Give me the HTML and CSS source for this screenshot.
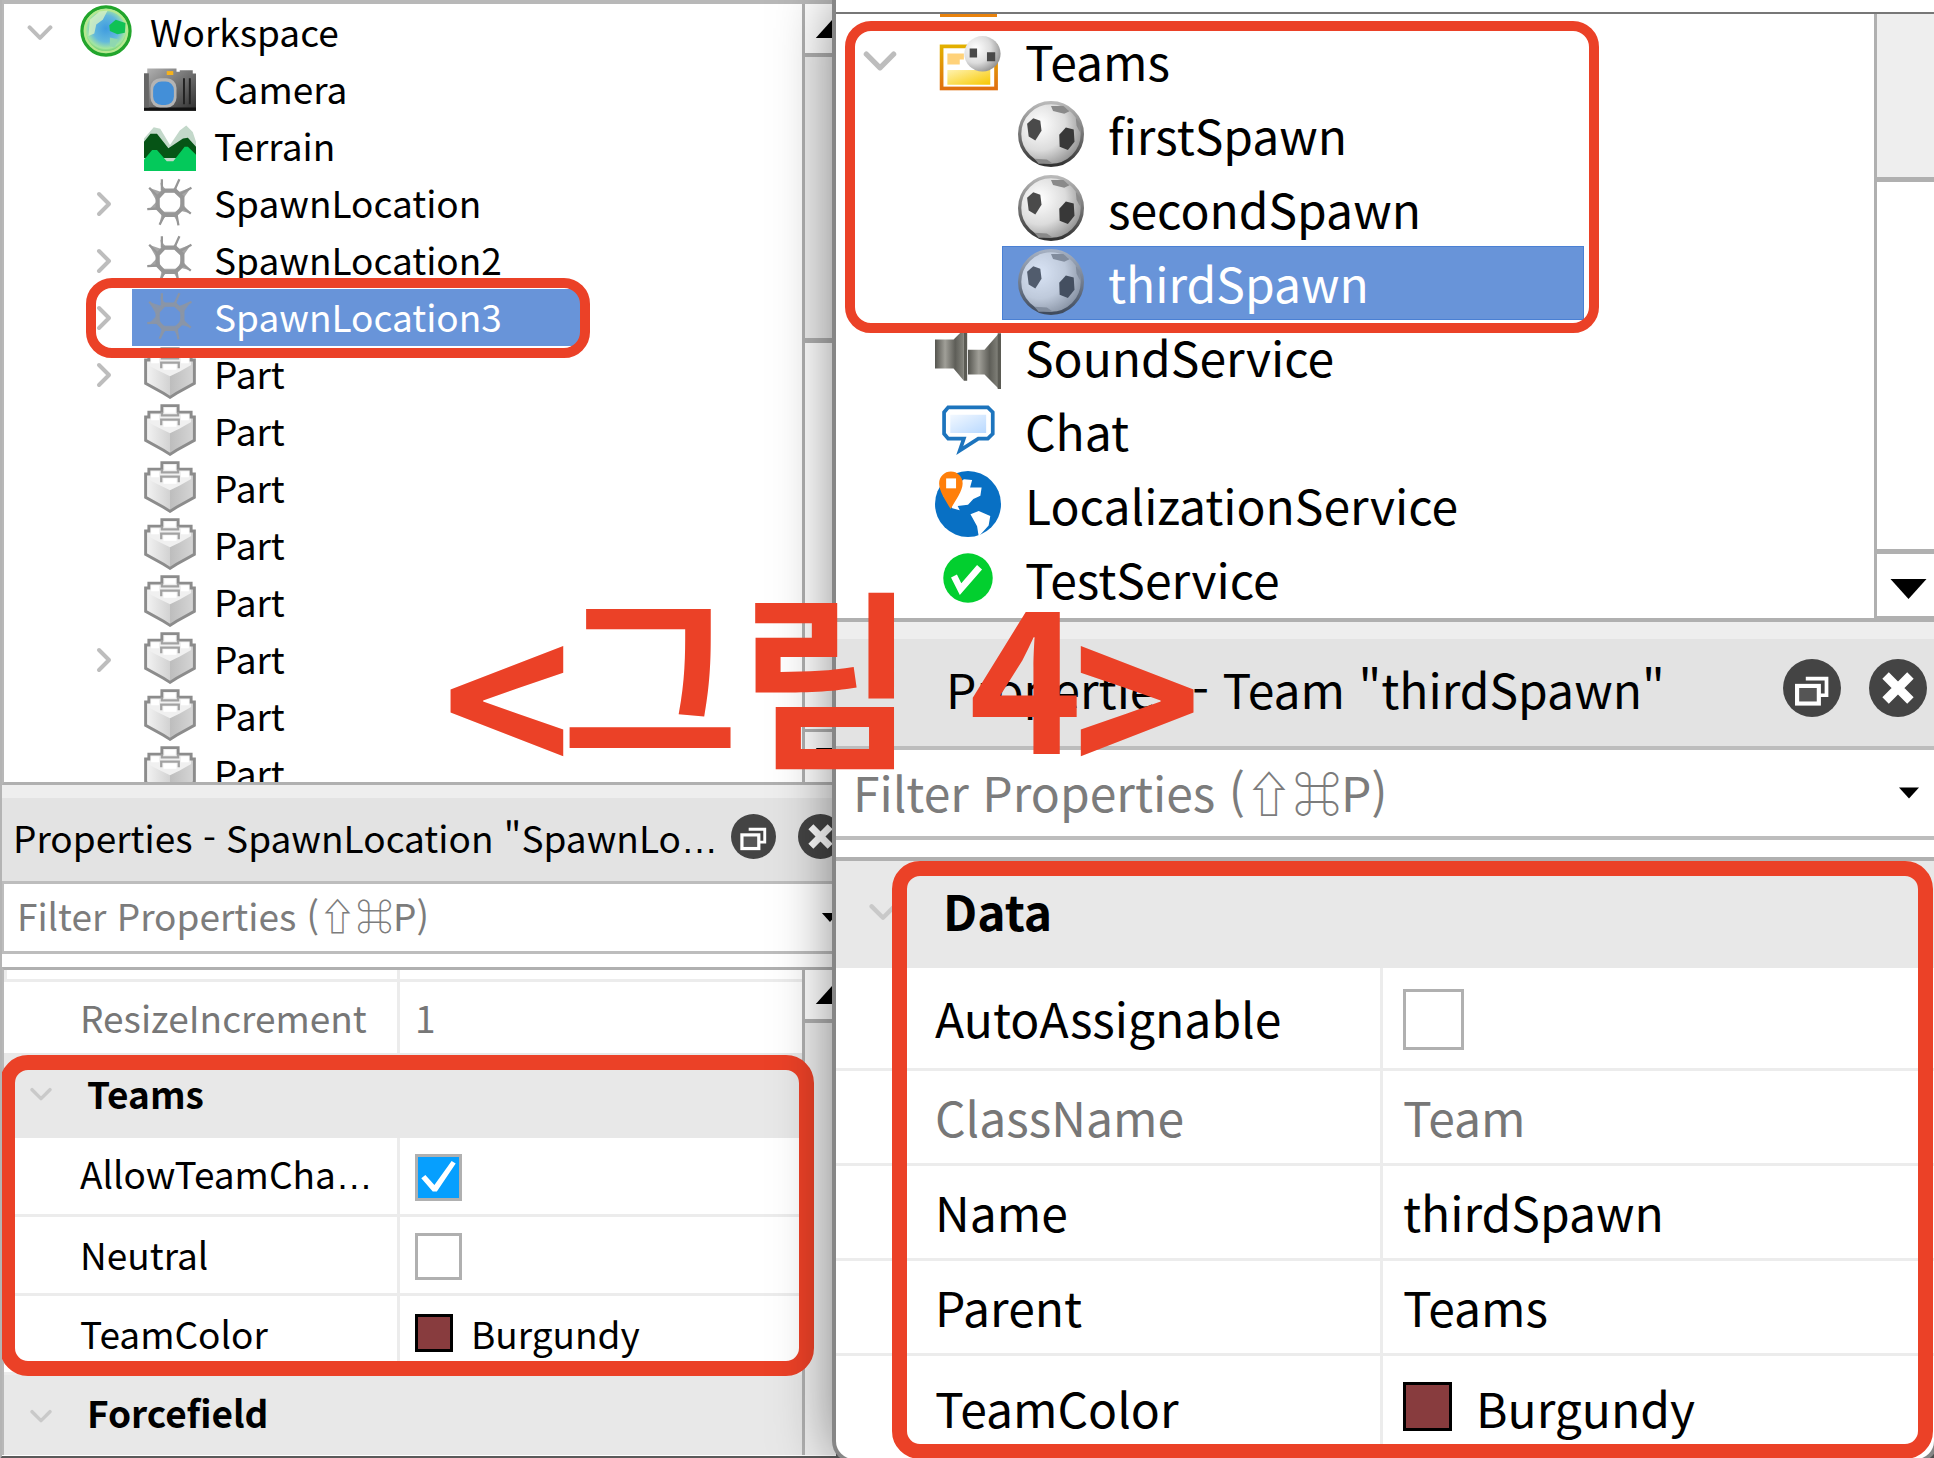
FILE: index.html
```html
<!DOCTYPE html>
<html lang="ko">
<head>
<meta charset="utf-8">
<title>그림 4</title>
<link rel="stylesheet" href="styles.css">
</head>
<body>
<svg class="sprite" aria-hidden="true">
  <defs>
    <radialGradient id="g-globe" cx="0.5" cy="0.45" r="0.55">
      <stop offset="0" stop-color="#3f9be0"/><stop offset="0.5" stop-color="#63b9dc"/><stop offset="0.75" stop-color="#a4e6a0"/><stop offset="1" stop-color="#2fae3a"/>
    </radialGradient>
    <linearGradient id="g-cam" x1="0" x2="1" y1="0" y2="1"><stop offset="0" stop-color="#b5b5b5"/><stop offset="1" stop-color="#2e2e2e"/></linearGradient>
    <linearGradient id="g-brick-l" x1="0" x2="1"><stop offset="0" stop-color="#f4f4f4"/><stop offset="1" stop-color="#d2d2d2"/></linearGradient>
    <linearGradient id="g-brick-r" x1="0" x2="1"><stop offset="0" stop-color="#bdbdbd"/><stop offset="1" stop-color="#d6d6d6"/></linearGradient>
    <radialGradient id="g-ball" cx="0.32" cy="0.35" r="0.75"><stop offset="0" stop-color="#fff"/><stop offset="0.55" stop-color="#dcdcdc"/><stop offset="1" stop-color="#8c8c8c"/></radialGradient>
    <linearGradient id="g-ball-edge" x1="0" x2="0" y1="0" y2="1"><stop offset="0" stop-color="#b9b9b9"/><stop offset="1" stop-color="#333"/></linearGradient>
    <linearGradient id="g-folder" x1="0" x2="1" y1="0" y2="1"><stop offset="0" stop-color="#fff3b0"/><stop offset="1" stop-color="#f7c800"/></linearGradient>
    <linearGradient id="g-folder-edge" x1="0" x2="0" y1="0" y2="1"><stop offset="0" stop-color="#e2b000"/><stop offset="1" stop-color="#e07010"/></linearGradient>
    <linearGradient id="g-horn" x1="0" x2="1"><stop offset="0" stop-color="#55554f"/><stop offset="0.35" stop-color="#a09f98"/><stop offset="0.7" stop-color="#5e5e58"/><stop offset="1" stop-color="#85857d"/></linearGradient>
    <linearGradient id="g-chat" x1="0" x2="1" y1="0" y2="1"><stop offset="0" stop-color="#f2f8ff"/><stop offset="1" stop-color="#b9d9ff"/></linearGradient>
  </defs>
  <symbol id="i-down" viewBox="0 0 32 20"><path d="M3 3l13 13L29 3" fill="none" stroke="#bdbdbd" stroke-width="5" stroke-linecap="round" stroke-linejoin="round"/></symbol>
  <symbol id="i-right" viewBox="0 0 16 26"><path d="M3 3l10 10L3 23" fill="none" stroke="#bdbdbd" stroke-width="4" stroke-linecap="round" stroke-linejoin="round"/></symbol>
  <symbol id="i-globe" viewBox="0 0 16 16">
    <circle cx="8" cy="8" r="7.4" fill="url(#g-globe)" stroke="#22a52c" stroke-width="1"/>
    <circle cx="8" cy="8" r="6.500" fill="none" stroke="#b6e890" stroke-width="0.7"/>
    <path d="M3 4.500L6 2l2.500-.3L7 4.500 5 6l-.6 2.800L2.600 9.500z" fill="#d9f3c0" opacity="0.8"/>
    <path d="M9 6.200L11 4.500l3 1-.2 3L11.500 9 9.200 8z" fill="#10c255"/>
    <path d="M9.200 10l2.500.5-1 2.600-1.500-.5z" fill="#8fd7b0"/>
  </symbol>
  <symbol id="i-camera" viewBox="0 0 16 16">
    <path d="M1 2h9v1h1V2.500h4V3.500h1V15H0V3.500h1z" fill="url(#g-cam)"/>
    <path d="M0 14h16v1H0z" fill="#111"/>
    <path d="M0 3.500h1.500V14H0z" fill="#666"/>
    <path d="M12 5h.6v8H12zM13.800 5h.6v8h-.6z" fill="#222"/>
    <rect x="2" y="5" width="8" height="9" rx="3" fill="#b4b4b4"/>
    <rect x="2.800" y="6" width="6.400" height="7.200" rx="2.600" fill="#438fd8"/>
    <rect x="7" y="2.800" width="2" height="1.200" fill="#f6b21b"/>
  </symbol>
  <symbol id="i-terrain" viewBox="0 0 16 16">
    <path d="M0 6l3-3.500 2 .5 3 5 3-4.500 2-1.500 2 2 1 3v8H0z" fill="#c3d8ca"/>
    <path d="M0 7l2-2.500h2L7.500 9 12 6 13.500 5.800 16 8.500V12H0z" fill="#065416"/>
    <path d="M0 12.500L2.500 9.500h1.500L7 13h2l3.500-4.500h1L16 11v5H0z" fill="#04c95b"/>
  </symbol>
  <symbol id="i-spawn" viewBox="0 0 16 16">
    <g fill="none" stroke="#969696">
      <path d="M6.200 4.500h3.400L11.800 6.600v3.300L9.600 12H6.200L4.200 9.900V6.600z" stroke-width="1.300"/>
      <path d="M5.500 1v3.500M9.300 4.500L10.900 1M11 5.600L14.600 3.600M11.600 9.400L14.400 11.600M10 11.800l.6 3.400M6.400 11.800L4.800 15M4.200 10L1 10.200M4.500 6.600L1.600 3.600" stroke-width="0.700"/>
    </g>
    <path d="M5 2L5.600 5h4l.8-2.500-1.400 1.600H6.600zM14.500 3.500l-4 1.500 1 2.800zM14.500 11.500l-3-3.200-1 2.200zM10.700 15L10 11H5.600l-.8 3.500 2-2.200h2.400zM1.500 10.300h3.700L4.200 7.500zM1.500 3.600l2.400 4.200L5.600 5z" fill="#969696" opacity="0.850"/>
  </symbol>
  <symbol id="i-part" viewBox="0 0 16 16">
    <path d="M.5 4H8v11.500L6 14l-5.500-3z" fill="url(#g-brick-l)"/>
    <path d="M15.500 4H8v11.500l2-1.500 5.500-3z" fill="url(#g-brick-r)"/>
    <path d="M1.500 2.500h4v-2h5v2h4v3L11 7.500 8 9 5 7.500 1.500 5.800z" fill="#f0f0f0"/>
    <path d="M8 15.500L6 14.200.5 11.200V4h1V2.500h4v-2h5v2h4V4h1v7.200L10 14.200z" fill="none" stroke="#8c8c8c" stroke-width="0.900"/>
    <path d="M5.500 2.500v1h5v-1M5.300 6.500V4.800h5.400v1.700" fill="none" stroke="#a2a2a2" stroke-width="0.700"/>
    <path d="M6.300 1.200h3.400v1.500H6.300zM2.200 3.200h2.400v1.800H2.200zM11.400 3.200h2.400v1.800h-2.400zM6 5.400h4v1.600H6z" fill="#fff"/>
  </symbol>
  <symbol id="i-ball" viewBox="0 0 16 16">
    <circle cx="8" cy="8" r="7.600" fill="url(#g-ball)" stroke="url(#g-ball-edge)" stroke-width="0.800"/>
    <path d="M2.200 5.500l1.500-1.300 1.700.6.300 2.400-1.500 2.400-1.600-1z" fill="#4a4a4a"/>
    <path d="M10 8.200l1.600-1.800 1.900.5.200 3-1.600 2-2-.8z" fill="#383838"/>
    <path d="M8 1.200h3l1.500 1.300-1.300.6L8.500 2.400zM4 14l3 .2 1.500 1H5zM14 4l1 1.500v2L14.200 6z" fill="#8a8a8a"/>
  </symbol>
  <symbol id="i-folder" viewBox="0 0 16 16">
    <rect x="1.600" y="4.700" width="13.200" height="10.200" fill="#fff" stroke="url(#g-folder-edge)" stroke-width="0.900"/>
    <path d="M3 6.400h4v1.500H6v1.200H3z" fill="#ffd27a"/>
    <path d="M3 10.400h10.400v3.600H3z" fill="url(#g-folder)"/>
    <ellipse cx="11.500" cy="6.500" rx="4.400" ry="4.300" fill="url(#g-ball)"/>
    <path d="M8.400 5.200h1.800v2.200H8.400zM12.600 6.100h2v2.200h-2z" fill="#484848"/>
  </symbol>
  <symbol id="i-sound" viewBox="0 0 16 16">
    <path d="M0 4h4.500L7 1.500V14L4.500 11H0z" fill="url(#g-horn)"/>
    <path d="M8 6.500h4l3.500-4V16L12 12.500H8z" fill="url(#g-horn)"/>
    <path d="M7 1.500h.8V14H7zM15.200 2.500h.8V16h-.8z" fill="#5b5b54"/>
  </symbol>
  <symbol id="i-chat" viewBox="0 0 16 16">
    <path d="M3.200 2.500h9.600l1.200 1.200v5.200l-1.200 1.200H10.500L6 13 7 10.100H3.200L2.200 8.900V3.700z" fill="#fff" stroke="#1d74bd" stroke-width="0.900"/>
    <path d="M3.700 4.300h8.700v4.400H3.700z" fill="url(#g-chat)"/>
  </symbol>
  <symbol id="i-local" viewBox="0 0 16 16">
    <circle cx="8" cy="8" r="8" fill="#0870c4"/>
    <path d="M7 2l2 .2L8.500 4l2.800 0-.3 2L9.300 6.800 8 8.200 5.500 8.500l.5 1L4.200 9 2 6z" fill="#fff"/>
    <path d="M8.600 10.500l2-.8 2.800 1.200-.4 2.300-2.400 2.700-.4-2.500z" fill="#fff"/>
    <path d="M3.800 9.200C2.500 7 1 4.800 1 3A2.850 2.850 0 0 1 6.700 3C6.700 4.800 5 7 3.800 9.200z" fill="#ff7f0a"/>
    <rect x="2.700" y="1.800" width="2.400" height="2.400" fill="#fff"/>
  </symbol>
  <symbol id="i-test" viewBox="0 0 16 16">
    <circle cx="8" cy="8" r="6" fill="#02cf2f"/>
    <path d="M4.600 7.500l1.600 3.200L10.800 5.400" fill="none" stroke="#fff" stroke-width="1.600"/>
  </symbol>
  <symbol id="i-float" viewBox="0 0 28 28">
    <circle cx="14" cy="14" r="14" fill="#444"/>
    <path d="M11 9.500h10v8h-3" fill="none" stroke="#fff" stroke-width="1.800"/>
    <rect x="6.800" y="13" width="10.500" height="8.500" fill="#555" stroke="#fff" stroke-width="2"/>
  </symbol>
  <symbol id="i-close" viewBox="0 0 28 28">
    <circle cx="14" cy="14" r="14" fill="#444"/>
    <path d="M8 8l12 12M20 8L8 20" stroke="#fff" stroke-width="4.400"/>
  </symbol>
  <symbol id="i-tri-up" viewBox="0 0 18 10"><path d="M0 10h18L9 0z"/></symbol>
  <symbol id="i-tri-down" viewBox="0 0 18 10"><path d="M0 0h18L9 10z"/></symbol>
</svg>

<main class="page">
  <section class="window small" aria-label="SpawnLocation3">
    <div class="explorer">
      <ul class="tree">
        <li><div class="row"><span class="twisty"><svg class="down"><use href="#i-down"/></svg></span><span class="label"><svg class="icon"><use href="#i-globe"/></svg>Workspace</span></div>
          <ul>
            <li><div class="row"><span class="twisty"></span><span class="label"><svg class="icon"><use href="#i-camera"/></svg>Camera</span></div></li>
            <li><div class="row"><span class="twisty"></span><span class="label"><svg class="icon"><use href="#i-terrain"/></svg>Terrain</span></div></li>
            <li><div class="row"><span class="twisty"><svg class="right"><use href="#i-right"/></svg></span><span class="label"><svg class="icon"><use href="#i-spawn"/></svg>SpawnLocation</span></div></li>
            <li><div class="row"><span class="twisty"><svg class="right"><use href="#i-right"/></svg></span><span class="label"><svg class="icon"><use href="#i-spawn"/></svg>SpawnLocation2</span></div></li>
            <li><div class="row"><span class="twisty"><svg class="right"><use href="#i-right"/></svg></span><span class="label selected"><svg class="icon"><use href="#i-spawn"/></svg>SpawnLocation3</span></div></li>
            <li><div class="row"><span class="twisty"><svg class="right"><use href="#i-right"/></svg></span><span class="label"><svg class="icon"><use href="#i-part"/></svg>Part</span></div></li>
            <li><div class="row"><span class="twisty"></span><span class="label"><svg class="icon"><use href="#i-part"/></svg>Part</span></div></li>
            <li><div class="row"><span class="twisty"></span><span class="label"><svg class="icon"><use href="#i-part"/></svg>Part</span></div></li>
            <li><div class="row"><span class="twisty"></span><span class="label"><svg class="icon"><use href="#i-part"/></svg>Part</span></div></li>
            <li><div class="row"><span class="twisty"></span><span class="label"><svg class="icon"><use href="#i-part"/></svg>Part</span></div></li>
            <li><div class="row"><span class="twisty"><svg class="right"><use href="#i-right"/></svg></span><span class="label"><svg class="icon"><use href="#i-part"/></svg>Part</span></div></li>
            <li><div class="row"><span class="twisty"></span><span class="label"><svg class="icon"><use href="#i-part"/></svg>Part</span></div></li>
            <li><div class="row"><span class="twisty"></span><span class="label"><svg class="icon"><use href="#i-part"/></svg>Part</span></div></li>
          </ul>
        </li>
      </ul>
      <div class="scrollbar">
        <button class="step" type="button" aria-label="Scroll up"><svg><use href="#i-tri-up"/></svg></button>
        <div class="groove"></div>
        <div class="thumb"></div>
        <button class="step" type="button" aria-label="Scroll down"><svg><use href="#i-tri-down"/></svg></button>
      </div>
    </div>
    <header class="titlebar">
      <h2>Properties - SpawnLocation "SpawnLo<span class="more">…</span></h2>
      <button type="button" aria-label="Float"><svg><use href="#i-float"/></svg></button>
      <button type="button" aria-label="Close"><svg><use href="#i-close"/></svg></button>
    </header>
    <div class="filter">
      <input type="text" aria-label="Filter Properties" placeholder="Filter Properties (⇧⌘P)">
      <button type="button" aria-label="Filter history"><svg><use href="#i-tri-down"/></svg></button>
    </div>
    <div class="properties">
      <table>
        <colgroup><col class="names"><col></colgroup>
        <tbody>
          <tr class="sliver"><td></td><td></td></tr>
          <tr class="readonly first"><th scope="row">ResizeIncrement</th><td>1</td></tr>
        </tbody>
        <tbody>
          <tr class="group"><th colspan="2" scope="rowgroup"><svg><use href="#i-down"/></svg>Teams</th></tr>
          <tr><th scope="row"><label for="allow">AllowTeamCha<span class="more">…</span></label></th><td><input type="checkbox" id="allow" checked></td></tr>
          <tr><th scope="row"><label for="neutral">Neutral</label></th><td><input type="checkbox" id="neutral"></td></tr>
          <tr><th scope="row">TeamColor</th><td><span class="color"><i class="swatch"></i>Burgundy</span></td></tr>
        </tbody>
        <tbody>
          <tr class="group last"><th colspan="2" scope="rowgroup"><svg><use href="#i-down"/></svg>Forcefield</th></tr>
        </tbody>
      </table>
      <div class="scrollbar">
        <button class="step" type="button" aria-label="Scroll up"><svg><use href="#i-tri-up"/></svg></button>
        <div class="groove"></div>
      </div>
    </div>
    <div class="mark mark-location"></div>
    <div class="mark mark-teams"></div>
  </section>

  <section class="window large" aria-label="thirdSpawn">
    <div class="explorer">
      <ul class="tree">
        <li class="previous"></li>
        <li><div class="row"><span class="twisty"><svg class="down"><use href="#i-down"/></svg></span><span class="label"><svg class="icon"><use href="#i-folder"/></svg>Teams</span></div>
          <ul>
            <li><div class="row"><span class="twisty"></span><span class="label"><svg class="icon"><use href="#i-ball"/></svg>firstSpawn</span></div></li>
            <li><div class="row"><span class="twisty"></span><span class="label"><svg class="icon"><use href="#i-ball"/></svg>secondSpawn</span></div></li>
            <li><div class="row"><span class="twisty"></span><span class="label selected"><svg class="icon"><use href="#i-ball"/></svg>thirdSpawn</span></div></li>
          </ul>
        </li>
        <li><div class="row"><span class="twisty"></span><span class="label"><svg class="icon"><use href="#i-sound"/></svg>SoundService</span></div></li>
        <li><div class="row"><span class="twisty"></span><span class="label"><svg class="icon"><use href="#i-chat"/></svg>Chat</span></div></li>
        <li><div class="row"><span class="twisty"></span><span class="label"><svg class="icon"><use href="#i-local"/></svg>LocalizationService</span></div></li>
        <li><div class="row"><span class="twisty"></span><span class="label"><svg class="icon"><use href="#i-test"/></svg>TestService</span></div></li>
      </ul>
      <div class="scrollbar">
        <div class="groove"></div>
        <div class="thumb"></div>
        <button class="step" type="button" aria-label="Scroll down"><svg><use href="#i-tri-down"/></svg></button>
      </div>
    </div>
    <header class="titlebar">
      <h2>Properties - Team "thirdSpawn"</h2>
      <button type="button" aria-label="Float"><svg><use href="#i-float"/></svg></button>
      <button type="button" aria-label="Close"><svg><use href="#i-close"/></svg></button>
    </header>
    <div class="filter">
      <input type="text" aria-label="Filter Properties" placeholder="Filter Properties (⇧⌘P)">
      <button type="button" aria-label="Filter history"><svg><use href="#i-tri-down"/></svg></button>
    </div>
    <div class="properties">
      <table>
        <colgroup><col class="names"><col></colgroup>
        <tbody>
          <tr class="group"><th colspan="2" scope="rowgroup"><svg><use href="#i-down"/></svg>Data</th></tr>
          <tr class="first"><th scope="row"><label for="auto">AutoAssignable</label></th><td><input type="checkbox" id="auto"></td></tr>
          <tr class="readonly"><th scope="row">ClassName</th><td>Team</td></tr>
          <tr><th scope="row">Name</th><td>thirdSpawn</td></tr>
          <tr><th scope="row">Parent</th><td>Teams</td></tr>
          <tr class="last"><th scope="row">TeamColor</th><td><span class="color"><i class="swatch"></i>Burgundy</span></td></tr>
        </tbody>
      </table>
    </div>
    <div class="mark mark-tree"></div>
    <div class="mark mark-data"></div>
  </section>

  <p class="caption"><span class="angle">&lt;</span>그림 4<span class="angle">&gt;</span></p>
</main>
</body>
</html>
```
FILE: styles.css
```css
* { box-sizing: border-box; }

body {
  margin: 0;
  background: #5a5a5a;
  color: #000;
  font-family: "Noto Sans CJK KR", "Noto Sans", sans-serif;
}

.sprite { position: absolute; width: 0; height: 0; }

.page {
  position: relative;
  display: grid;
  grid-template-columns: 836fr 1098fr;
  overflow: hidden;
}

ul { list-style: none; margin: 0; padding: 0; }
button { border: 0; padding: 0; background: none; }
svg { display: block; flex: none; }

/* Windows: the same parts at two zoom levels */
.window {
  position: relative;
  background: #fff;
  font-size: var(--text);
  min-width: 0;
}

.small {
  --text: 37px;
  --row: 57px;
  --icon: 52px;
  --twisty: 56px;
  --label-pad: 12px;
  --label-gap: 18px;
  --indent: 64px;
  --line: 3px;
  --bar: 56px;
  --tri: 34px;
  --prop: 79px;
  --box: 47px;
  --chip: 38px;
  --dot: 45px;
  border-left: 2px solid #b4b4b4;
  border-bottom: 3px solid #5a5a5a;
  overflow: hidden;
}

.large {
  --text: 48px;
  --row: 74px;
  --icon: 66px;
  --twisty: 78px;
  --label-pad: 16px;
  --label-gap: 24px;
  --indent: 83px;
  --line: 4px;
  --bar: 60px;
  --tri: 37px;
  --prop: 95px;
  --box: 61px;
  --chip: 49px;
  --dot: 58px;
  border-radius: 0 0 18px 18px;
  box-shadow: 0 0 0 4px #868686, 0 0 60px rgba(0, 0, 0, 0.5);
}

/* Explorer tree */
.explorer {
  display: flex;
  overflow: hidden;
  border-bottom: var(--line) solid #b0b0b0;
}
.small .explorer { height: 785px; margin-right: -22px; border-top: 4px solid #b8b8b8; border-left: 2px solid #b8b8b8; }
.large .explorer { height: 622px; border-top: 12px solid #fff; box-shadow: inset 0 2px #777; }

.tree { flex: 1; min-width: 0; }
.small .tree { padding-left: 8px; }
.large .tree { padding: 0 0 0 5px; }
.tree ul { padding-left: var(--indent); }
.large .explorer { padding-top: 2px; background: linear-gradient(#777 2px, #fff 2px); box-shadow: none; }
.previous { width: 57px; height: 10px; margin-left: 99px; border-top: 3px solid #e8820c; }

.row { display: flex; height: var(--row); }
.twisty { display: flex; align-items: center; justify-content: center; width: var(--twisty); }
.small .down { width: 26px; height: 16px; }
.large .down { width: 34px; height: 21px; }
.right { width: 16px; height: 26px; }

.label {
  display: flex;
  align-items: center;
  gap: var(--label-gap);
  padding: 0 0 3px var(--label-pad);
  line-height: 54px;
  white-space: nowrap;
}
.icon { width: var(--icon); height: var(--icon); }
.selected { background: #6894d9; color: #fff; }
.small .selected { min-width: 448px; }
.large .selected { min-width: 582px; box-shadow: inset 0 0 0 1px #4a80d4; }
.selected .icon { opacity: 0.75; }

/* Scroll bars */
.scrollbar { display: flex; flex-direction: column; flex: none; width: var(--bar); border-left: 3px solid #b0b0b0; }
.scrollbar svg { width: var(--tri); height: 20px; }
.groove { background: #eee; }
.thumb { flex: 1; border-top: 5px solid #b0b0b0; background: #fff; }
.step { display: flex; align-items: center; justify-content: center; }
.small .step { height: 53px; border-bottom: 4px solid #b0b0b0; }
.small .thumb + .step { border-top: 3px solid #b0b0b0; border-bottom: 0; }
.small .explorer .groove { height: 281px; }
.small .properties .groove { flex: 1; }
.large .groove { height: 163px; }
.large .step { height: 69px; padding: 8px 0 0 5px; border-top: 5px solid #b0b0b0; border-bottom: 2px solid #b0b0b0; }
.small .scrollbar svg { height: 18px; }

/* Properties title bar */
.titlebar {
  display: flex;
  align-items: center;
  background: #e3e3e3;
  border-bottom: var(--line) solid #bdbdbd;
}
.titlebar h2 { flex: 1; min-width: 0; margin: 0; font-size: var(--text); font-weight: 400; white-space: nowrap; }
.titlebar svg { width: var(--dot); height: var(--dot); }
.small .titlebar { height: 99px; margin-right: -7px; padding: 0 0 6px 11px; gap: 22px; border-top: 13px solid #eee; }
.large .titlebar { height: 128px; padding: 0 7px 10px 110px; gap: 28px; border-top: 17px solid #eee; }

/* The ellipsis sits on the baseline in this face */
.more { font-family: "Liberation Sans", sans-serif; }

/* Filter box */
.filter { display: flex; align-items: center; border-bottom: var(--line) solid #bdbdbd; }
.filter input {
  flex: 1;
  min-width: 0;
  height: 60px;
  padding: 0 0 5px;
  border: 0;
  outline: 0;
  background: none;
  font: inherit;
}
.filter input::placeholder { color: #7c7c7c; opacity: 1; }
.small .filter { height: 70px; padding-left: 13px; border-left: 2px solid #bdbdbd; }
.small .filter button { margin-right: -3px; }
.small .filter svg { width: 18px; height: 9px; }
.large .filter { height: 90px; padding: 0 15px 0 17px; }
.large .filter svg { width: 20px; height: 12px; }

/* Property table */
.properties { display: flex; border-top: var(--line) solid #b0b0b0; }
.small .properties { margin: 13px -22px 0 0; border-left: 2px solid #b8b8b8; }
.large .properties { margin-top: 17px; overflow: hidden; border-radius: 0 0 18px 18px; }

table { flex: 1; width: 100%; border-collapse: separate; border-spacing: 0; table-layout: fixed; }
th, td { height: var(--prop); padding: 0 0 2px; text-align: left; font-weight: 400; line-height: 56px; white-space: nowrap; border-bottom: 3px solid #ececec; }
td { border-left: 3px solid #ececec; }
.readonly { color: #777; }

.small .names { width: 393px; }
.small tr > th { padding-left: 76px; }
.small td { padding-left: 15px; }
.small .sliver td { height: 12px; padding: 0; line-height: 8px; }
.small .first > * { height: 71px; border-bottom: 0; }
.small .group th { height: 85px; }
.small .last th { height: 80px; }

.large .names { width: 544px; }
.large tr > th { padding-left: 99px; }
.large td { padding-left: 20px; }
.large .group th { height: 107px; }
.large .first > * { height: 103px; }
.large .last > * { height: 103px; border-bottom: 0; }

.group th { position: relative; background: #e8e8e8; border-bottom: 0; font-weight: 700; }
.group svg { position: absolute; opacity: 0.7; }
.small .group th { padding-left: 83px; padding-bottom: 6px; }
.small .group svg { left: 26px; top: 34px; width: 22px; height: 15px; }
.large .group th { padding-left: 107px; padding-bottom: 10px; }
.large .group svg { left: 33px; top: 42px; width: 28px; height: 19px; }

input[type="checkbox"] {
  appearance: none;
  display: block;
  width: var(--box);
  height: var(--box);
  margin: 5px 0 0;
  border: 3px solid #b0b0b0;
  background: #fff;
}
input[type="checkbox"]:checked { background: #069ffe; }
input[type="checkbox"]:checked::after {
  content: "";
  display: block;
  height: 100%;
  background: #fff;
  clip-path: polygon(8% 52%, 18% 44%, 40% 68%, 82% 10%, 92% 16%, 46% 84%, 36% 84%);
}

.color { display: flex; align-items: center; }
.swatch { width: var(--chip); height: var(--chip); border: 3px solid #000; background: #883c3e; }
.small .color { gap: 18px; }
.large .color { gap: 24px; }

/* Red annotations */
.mark { position: absolute; border: 10px solid #eb4127; border-radius: 26px; pointer-events: none; }
.mark-location { left: 84px; top: 278px; width: 504px; height: 80px; }
.mark-teams { left: -2px; right: 22px; top: 1055px; height: 321px; border-width: 15px; border-radius: 28px; }
.mark-tree { left: 9px; top: 21px; width: 754px; height: 312px; }
.mark-data { left: 56px; right: 1px; top: 861px; bottom: 0; border-width: 15px; border-radius: 28px; }

.caption {
  position: absolute;
  left: 452px;
  top: 530px;
  margin: 0;
  color: #eb4127;
  font-size: 192px;
  font-weight: 700;
  line-height: 280px;
  white-space: nowrap;
}
.angle { margin: 0 -10px; font-size: 220px; line-height: 0; vertical-align: -30px; }
```
